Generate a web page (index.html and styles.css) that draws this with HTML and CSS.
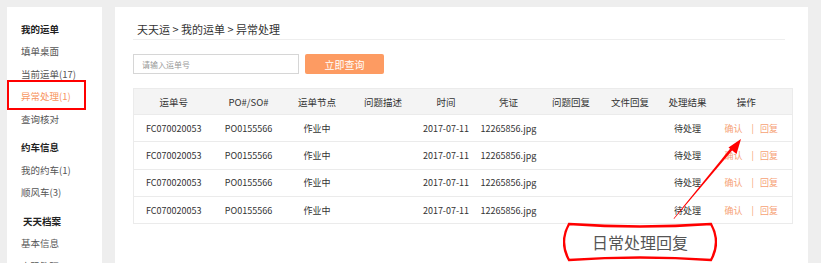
FILE: index.html
```html
<!DOCTYPE html>
<html lang="zh-CN">
<head>
    <meta charset="UTF-8">
    <title>异常处理</title>
    <link rel="stylesheet" href="styles.css">
</head>
<body>
    <div class="page">
        <!-- 左侧菜单 -->
        <div class="sidebar">
            <div class="menu-title">我的运单</div>
            <div class="menu-item">填单桌面</div>
            <div class="menu-item">当前运单(17)</div>
            <div class="menu-item active marked">异常处理(1)</div>
            <div class="menu-item">查询核对</div>

            <div class="menu-title section">约车信息</div>
            <div class="menu-item">我的约车(1)</div>
            <div class="menu-item">顺风车(3)</div>

            <div class="menu-title section shifted">天天档案</div>
            <div class="menu-item">基本信息</div>
            <div class="menu-item">密码管理</div>
        </div>

        <!-- 主内容 -->
        <div class="panel">
            <div class="crumb">天天运 &gt; 我的运单 &gt; 异常处理</div>

            <div class="search">
                <input type="text" placeholder="请输入运单号">
                <button>立即查询</button>
            </div>

            <table class="orders">
                <colgroup>
                    <col style="width:80px"><col style="width:70px"><col style="width:67px"><col style="width:65px"><col style="width:61px">
                    <col style="width:64px"><col style="width:61px"><col style="width:57px"><col style="width:58px"><col style="width:76px">
                </colgroup>
                <thead>
                    <tr>
                        <th>运单号</th><th>PO#/SO#</th><th>运单节点</th><th>问题描述</th><th>时间</th>
                        <th>凭证</th><th>问题回复</th><th>文件回复</th><th>处理结果</th><th class="ops">操作</th>
                    </tr>
                </thead>
                <tbody>
                    <tr>
                        <td>FC070020053</td><td>PO0155566</td><td>作业中</td><td></td><td>2017-07-11</td>
                        <td>12265856.jpg</td><td></td><td></td><td>待处理</td>
                        <td class="ops"><a>确认</a><span class="sep">|</span><a>回复</a></td>
                    </tr>
                    <tr>
                        <td>FC070020053</td><td>PO0155566</td><td>作业中</td><td></td><td>2017-07-11</td>
                        <td>12265856.jpg</td><td></td><td></td><td>待处理</td>
                        <td class="ops"><a>确认</a><span class="sep">|</span><a>回复</a></td>
                    </tr>
                    <tr>
                        <td>FC070020053</td><td>PO0155566</td><td>作业中</td><td></td><td>2017-07-11</td>
                        <td>12265856.jpg</td><td></td><td></td><td>待处理</td>
                        <td class="ops"><a>确认</a><span class="sep">|</span><a>回复</a></td>
                    </tr>
                    <tr>
                        <td>FC070020053</td><td>PO0155566</td><td>作业中</td><td></td><td>2017-07-11</td>
                        <td>12265856.jpg</td><td></td><td></td><td>待处理</td>
                        <td class="ops"><a>确认</a><span class="sep">|</span><a>回复</a></td>
                    </tr>
                </tbody>
            </table>

            <!-- 标注：箭头 -->
            <svg class="arrow" width="80" height="90" viewBox="0 0 80 90">
                <polygon points="5,84 64.5,13.7 62.5,12 4.6,83.6" fill="#f00"/>
                <polygon points="72,4 67.5,19 59.5,12.5" fill="#f00"/>
            </svg>

            <!-- 标注：说明框 -->
            <div class="callout">
                <svg class="callout-shape" width="154" height="42" viewBox="0 0 154 42">
                    <path d="M6 3 Q77 8 148 3 Q158 21 148 39 Q77 34 6 39 Q-4 21 6 3 Z" fill="#fff" stroke="#f00" stroke-width="2.4"/>
                </svg>
                <span>日常处理回复</span>
            </div>
        </div>
    </div>
</body>
</html>
```

FILE: styles.css
```css
* {
    margin: 0;
    padding: 0;
    box-sizing: border-box;
}

body {
    font-family: "Noto Sans CJK SC", "Noto Sans", sans-serif;
    background-color: #fff;
    color: #333;
}

.page {
    display: flex;
    gap: 13px;
    height: 263px;
    padding: 7px 13px 0 7px;
    background-color: #eeeeee;
}

/* 左侧菜单 */
.sidebar {
    width: 95px;
    flex-shrink: 0;
    background-color: #fff;
    padding: 10.5px 0 0 14px;
    font-size: 9.5px;
}

.menu-title {
    height: 22.5px;
    line-height: 22.5px;
    font-weight: bold;
    color: #222;
}

.menu-title.section {
    margin-top: 6px;
}

.menu-title.shifted {
    padding-left: 2px;
}

.menu-item {
    height: 22.5px;
    line-height: 22.5px;
    color: #555;
}

.menu-item.active {
    color: #f7955e;
}

.marked {
    position: relative;
}

.marked::after {
    content: "";
    position: absolute;
    left: -14px;
    top: -5px;
    width: 75px;
    height: 26px;
    border: 2px solid #f00;
}

/* 主内容 */
.panel {
    position: relative;
    flex: 1;
    background-color: #fff;
    padding: 14px 15px 0 18px;
}

.crumb {
    margin-right: 8px;
    padding: 0 0 2px 4px;
    line-height: 16px;
    font-size: 11px;
    color: #333;
    border-bottom: 1px solid #eeeeee;
}

.search {
    display: flex;
    gap: 6px;
    margin-top: 14px;
}

.search input {
    width: 166px;
    height: 20px;
    border: 1px solid #d6d6d6;
    padding-left: 8px;
    font-family: inherit;
    font-size: 8px;
    outline: none;
}

.search input::placeholder {
    color: #999;
}

.search button {
    width: 79px;
    height: 20px;
    border: none;
    border-radius: 2px;
    background-color: #fd9b62;
    color: #fff;
    font-family: inherit;
    font-size: 10px;
}

.orders {
    width: 659px;
    margin-top: 14px;
    table-layout: fixed;
    border-collapse: collapse;
    border: 1px solid #ebebeb;
}

.orders th {
    height: 26px;
    background-color: #f4f4f4;
    font-size: 9.5px;
    font-weight: normal;
    color: #333;
    text-align: center;
}

.orders td {
    height: 27.3px;
    border-top: 1px solid #ebebeb;
    font-size: 9px;
    color: #333;
    text-align: center;
    white-space: nowrap;
}

.orders .ops {
    padding-right: 16px;
}

.orders td.ops {
    padding-right: 6px;
}

.ops a {
    color: #f6a275;
}

.ops .sep {
    color: #f6a275;
    margin: 0 6px 0 9px;
}

/* 标注 */
.arrow {
    position: absolute;
    left: 554px;
    top: 128px;
}

.callout {
    position: absolute;
    left: 448px;
    top: 214px;
    width: 154px;
    height: 42px;
    display: flex;
    align-items: center;
    justify-content: center;
}

.callout-shape {
    position: absolute;
    left: 0;
    top: 0;
}

.callout span {
    position: relative;
    font-size: 16px;
    color: #555;
}
```
